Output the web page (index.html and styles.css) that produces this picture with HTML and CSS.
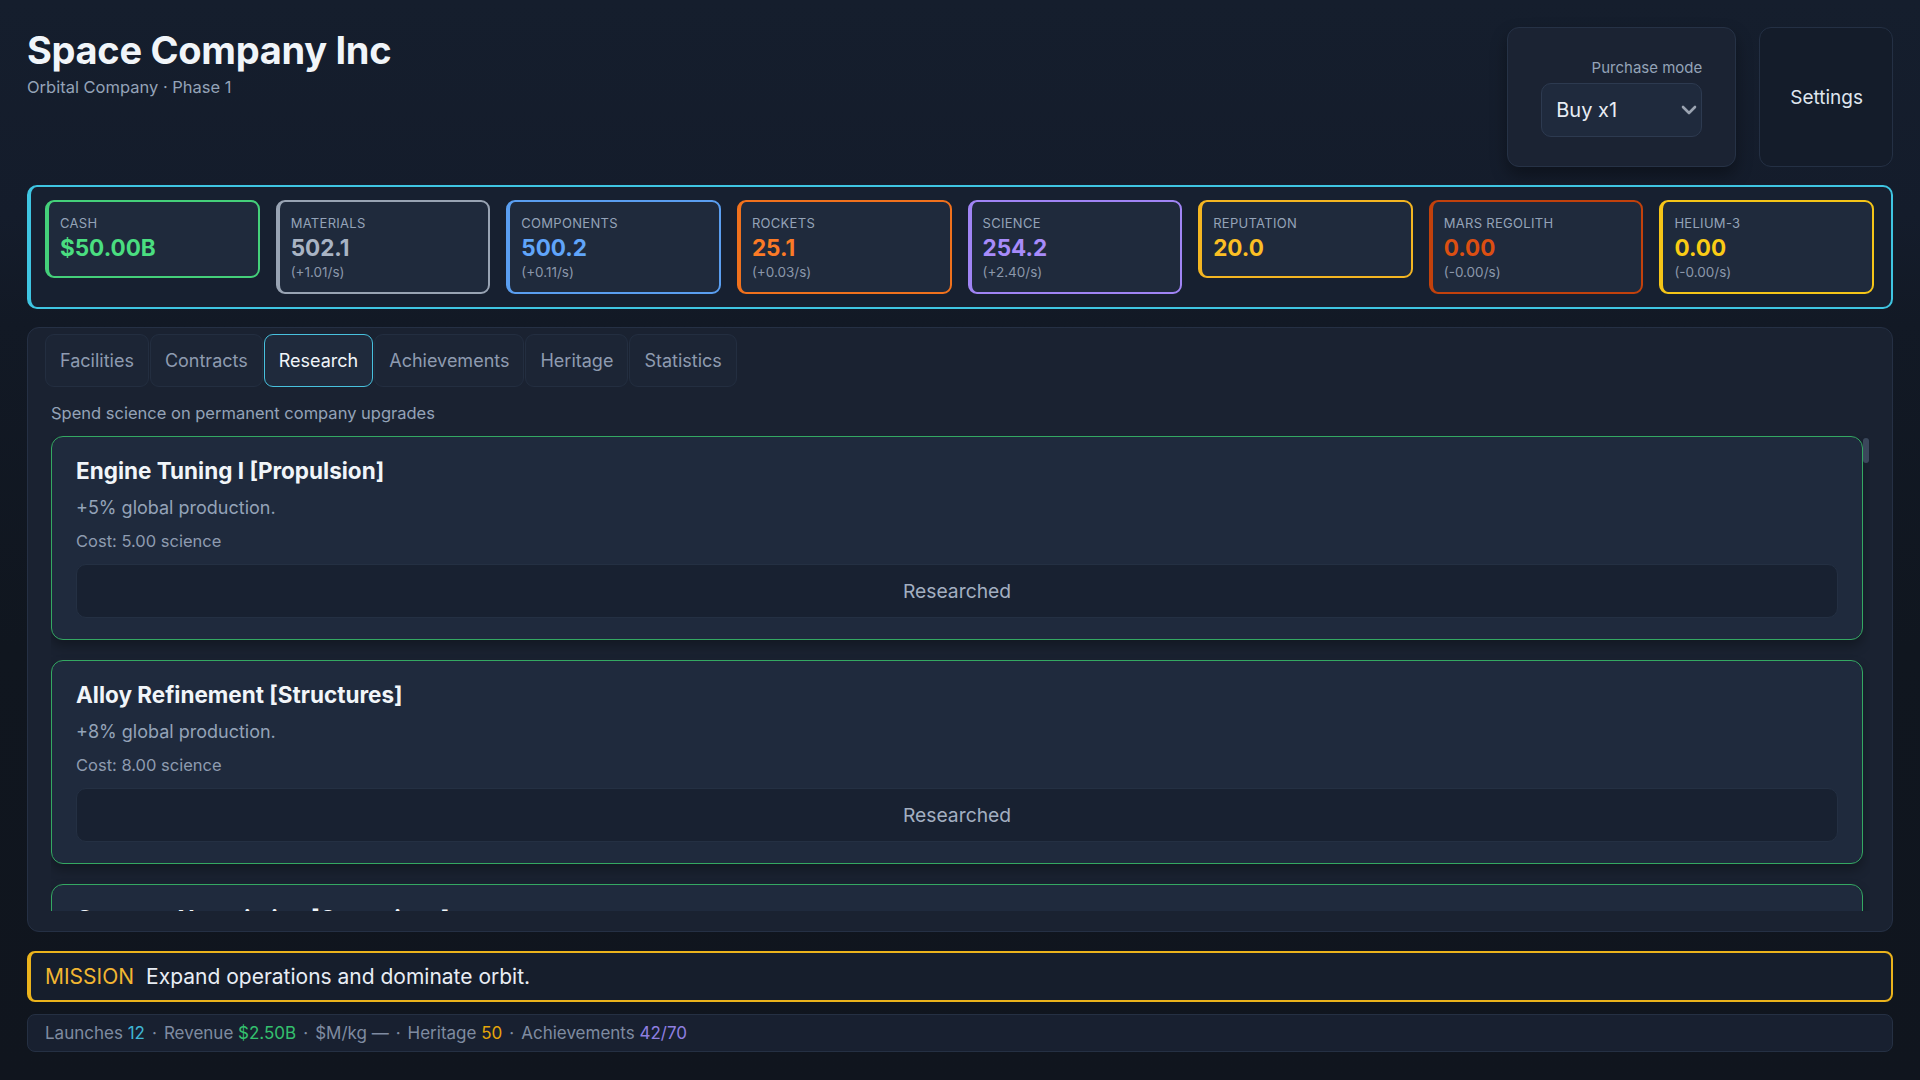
FILE: index.html
```html
<!DOCTYPE html>
<html lang="en">
<head>
<meta charset="utf-8">
<title>Space Company Inc</title>
<link rel="stylesheet" href="styles.css">
</head>
<body>
<div class="app">
  <header class="topbar">
    <div class="brand">
      <h1 class="brand-title">Space Company Inc</h1>
      <div class="brand-sub">Orbital Company · Phase 1</div>
    </div>
    <div class="top-actions">
      <div class="purchase-box">
        <label class="purchase-label" for="buymode">Purchase mode</label>
        <div class="select-wrap">
          <select id="buymode" class="select">
            <option>Buy x1</option>
            <option>Buy x10</option>
            <option>Buy x100</option>
            <option>Buy max</option>
          </select>
          <svg class="select-chevron" width="16" height="10" viewBox="0 0 16 10" aria-hidden="true"><polyline points="2,2 8,8 14,2" fill="none" stroke="#9aa3b1" stroke-width="2.6" stroke-linecap="round" stroke-linejoin="round"/></svg>
        </div>
      </div>
      <button class="settings-btn" type="button">Settings</button>
    </div>
  </header>

  <section class="resources">
    <div class="res res-cash"><div class="res-label">Cash</div><div class="res-value">$50.00B</div></div>
    <div class="res res-materials"><div class="res-label">Materials</div><div class="res-value">502.1</div><div class="res-rate">(+1.01/s)</div></div>
    <div class="res res-components"><div class="res-label">Components</div><div class="res-value">500.2</div><div class="res-rate">(+0.11/s)</div></div>
    <div class="res res-rockets"><div class="res-label">Rockets</div><div class="res-value">25.1</div><div class="res-rate">(+0.03/s)</div></div>
    <div class="res res-science"><div class="res-label">Science</div><div class="res-value">254.2</div><div class="res-rate">(+2.40/s)</div></div>
    <div class="res res-reputation"><div class="res-label">Reputation</div><div class="res-value">20.0</div></div>
    <div class="res res-regolith"><div class="res-label">Mars Regolith</div><div class="res-value">0.00</div><div class="res-rate">(-0.00/s)</div></div>
    <div class="res res-helium"><div class="res-label">Helium-3</div><div class="res-value">0.00</div><div class="res-rate">(-0.00/s)</div></div>
  </section>

  <main class="panel">
    <nav class="tabs">
      <button class="tab" type="button">Facilities</button>
      <button class="tab" type="button">Contracts</button>
      <button class="tab active" type="button">Research</button>
      <button class="tab" type="button">Achievements</button>
      <button class="tab" type="button">Heritage</button>
      <button class="tab" type="button">Statistics</button>
    </nav>
    <p class="panel-hint">Spend science on permanent company upgrades</p>
    <div class="list-wrap">
      <div class="research-list">
        <article class="research">
          <h3 class="research-title">Engine Tuning I [Propulsion]</h3>
          <p class="research-desc">+5% global production.</p>
          <div class="research-cost">Cost: 5.00 science</div>
          <button class="research-btn" type="button">Researched</button>
        </article>
        <article class="research">
          <h3 class="research-title">Alloy Refinement [Structures]</h3>
          <p class="research-desc">+8% global production.</p>
          <div class="research-cost">Cost: 8.00 science</div>
          <button class="research-btn" type="button">Researched</button>
        </article>
        <article class="research research-partial">
          <h3 class="research-title">Contract Negotiation [Operations]</h3>
        </article>
      </div>
      <div class="scroll-thumb" aria-hidden="true"></div>
    </div>
  </main>

  <div class="mission"><span class="mission-tag">MISSION</span><span class="mission-text">Expand operations and dominate orbit.</span></div>

  <footer class="statline">
    <span>Launches <b class="v-cyan">12</b></span><span class="sep">·</span><span>Revenue <b class="v-green">$2.50B</b></span><span class="sep">·</span><span>$M/kg —</span><span class="sep">·</span><span>Heritage <b class="v-gold">50</b></span><span class="sep">·</span><span>Achievements <b class="v-purple">42/70</b></span>
  </footer>
</div>
</body>
</html>
```

FILE: styles.css
```css
* { box-sizing: border-box; }

html, body { margin: 0; height: 100%; }

body {
  font-family: Inter, "Noto Sans", "Liberation Sans", sans-serif;
  color: #e2e8f0;
  background: linear-gradient(180deg, #151e2d 0%, #141c2b 20%, #121925 30%, #10161f 60%, #10151e 100%);
  -webkit-font-smoothing: antialiased;
}

.app {
  height: 100vh;
  padding: 27px 27px 28px;
  display: flex;
  flex-direction: column;
  gap: 18px;
}

/* Header */
.topbar {
  display: flex;
  justify-content: space-between;
  align-items: flex-start;
  flex-shrink: 0;
}

.brand-title {
  margin: 0;
  font-size: 38px;
  line-height: 46px;
  font-weight: 700;
  color: #f1f5f9;
  letter-spacing: -0.3px;
}

.brand-sub {
  margin-top: 3px;
  font-size: 16.5px;
  line-height: 22px;
  color: #94a3b8;
}

.top-actions {
  display: flex;
  gap: 23px;
  align-items: stretch;
}

.purchase-box {
  display: flex;
  flex-direction: column;
  align-items: flex-end;
  gap: 4px;
  padding: 29px 33px;
  background: #1b2333;
  border: 1px solid #263246;
  border-radius: 12px;
  box-shadow: 0 8px 16px rgba(0, 0, 0, 0.35);
}

.purchase-label {
  font-size: 15px;
  line-height: 22px;
  color: #94a3b8;
}

.select-wrap { position: relative; }

.select {
  -webkit-appearance: none;
  appearance: none;
  display: block;
  width: 161px;
  height: 54px;
  padding: 0 40px 0 14px;
  font-family: Inter, "Noto Sans", "Liberation Sans", sans-serif;
  font-size: 20px;
  color: #e8edf4;
  background: #1f2a3d;
  border: 1px solid #2d3a50;
  border-radius: 10px;
  outline: none;
}

.select-chevron {
  position: absolute;
  right: 5px;
  top: 22px;
  pointer-events: none;
}

.settings-btn {
  padding: 0 29px 0 30px;
  font-family: Inter, "Noto Sans", "Liberation Sans", sans-serif;
  font-size: 19px;
  color: #dfe5ee;
  background: #141c2a;
  border: 1px solid #243044;
  border-radius: 12px;
  cursor: pointer;
}

/* Resources */
.resources {
  display: grid;
  grid-template-columns: repeat(8, minmax(0, 1fr));
  gap: 16px;
  align-items: start;
  padding: 13px 17px 13px 14px;
  border: 2px solid #3fc5e2;
  border-left-width: 4px;
  border-radius: 10px;
  background: #172030;
  flex-shrink: 0;
}

.res {
  padding: 12px 12px 12px 11px;
  border: 2px solid #94a3b8;
  border-left-width: 4px;
  border-radius: 9px;
  background: #1f2a3c;
}

.res-label {
  font-size: 13px;
  line-height: 18px;
  letter-spacing: 0.3px;
  color: #94a3b8;
  text-transform: uppercase;
}

.res-value {
  font-size: 22.5px;
  line-height: 32px;
  font-weight: 700;
}

.res-rate {
  margin-top: 1px;
  font-size: 13.5px;
  line-height: 15px;
  color: #8b97aa;
}

.res-cash { border-color: #44d07a; }
.res-cash .res-value { color: #4ade80; }
.res-materials { border-color: #98a3b3; }
.res-materials .res-value { color: #a9b4c4; }
.res-components { border-color: #5a9ef0; }
.res-components .res-value { color: #60a5fa; }
.res-rockets { border-color: #f0711d; }
.res-rockets .res-value { color: #fb7a26; }
.res-science { border-color: #a084f5; }
.res-science .res-value { color: #a78bfa; }
.res-reputation { border-color: #f4b622; }
.res-reputation .res-value { color: #fbbf24; }
.res-regolith { border-color: #c2410c; }
.res-regolith .res-value { color: #dc4f12; }
.res-helium { border-color: #f5c518; }
.res-helium .res-value { color: #facc15; }

/* Main panel */
.panel {
  flex: 1;
  min-height: 0;
  display: flex;
  flex-direction: column;
  padding: 6px 22px 20px 23px;
  background: #1a2231;
  border: 1px solid #253044;
  border-radius: 12px;
}

.tabs {
  display: flex;
  gap: 1px;
  margin-left: -6px;
  flex-shrink: 0;
}

.tab {
  padding: 14px 14px;
  font-family: Inter, "Noto Sans", "Liberation Sans", sans-serif;
  font-size: 18px;
  line-height: 23px;
  color: #8e9bb0;
  background: #1c2535;
  border: 1px solid #232e40;
  border-radius: 9px;
  cursor: pointer;
}

.tab.active {
  color: #f1f5f9;
  background: #1f2a3c;
  border-color: #48c1de;
}

.panel-hint {
  margin: 15px 0 12px;
  font-size: 16.5px;
  line-height: 22px;
  color: #94a3b8;
  flex-shrink: 0;
}

.list-wrap {
  position: relative;
  flex: 1;
  min-height: 0;
  display: flex;
}

.research-list {
  flex: 1;
  min-height: 0;
  overflow: hidden;
  padding-right: 7px;
  display: flex;
  flex-direction: column;
  gap: 20px;
}

.scroll-thumb {
  position: absolute;
  right: 1px;
  top: 2px;
  width: 6px;
  height: 25px;
  background: #3a475b;
  border-radius: 3px;
}

.research {
  flex-shrink: 0;
  padding: 20px 24px 21px;
  background: #1f2a3d;
  border: 1px solid #34a862;
  border-radius: 12px;
  box-shadow: 0 6px 12px rgba(0, 0, 0, 0.3);
}

.research-partial { min-height: 204px; }

.research-title {
  margin: 0;
  font-size: 22.5px;
  line-height: 28px;
  font-weight: 700;
  color: #f1f5f9;
}

.research-desc {
  margin: 11px 0 0;
  font-size: 18px;
  line-height: 24px;
  color: #94a3b8;
}

.research-cost {
  margin-top: 11px;
  font-size: 16.5px;
  line-height: 21px;
  color: #8e9bb0;
}

.research-btn {
  display: block;
  width: 100%;
  height: 54px;
  margin-top: 12px;
  font-family: Inter, "Noto Sans", "Liberation Sans", sans-serif;
  font-size: 19.3px;
  color: #a3afc1;
  background: #182131;
  border: 1px solid #243043;
  border-radius: 10px;
}

/* Mission */
.mission {
  flex-shrink: 0;
  margin-top: 1px;
  display: flex;
  align-items: center;
  gap: 12px;
  padding: 10px 14px;
  background: #161e2c;
  border: 2px solid #ebb31c;
  border-left-width: 4px;
  border-radius: 8px;
  font-size: 21px;
  line-height: 27px;
}

.mission-tag { color: #f2b632; }
.mission-text { color: #e8edf4; }

/* Footer stats */
.statline {
  flex-shrink: 0;
  margin-top: -6px;
  padding: 7px 17px;
  background: #182030;
  border: 1px solid #253043;
  border-radius: 8px;
  font-size: 17px;
  line-height: 22px;
  color: #7f8ba0;
}

.statline b { font-weight: 400; }
.statline .sep { margin: 0 7px; }
.v-cyan { color: #3fb5d5; }
.v-green { color: #34c06e; }
.v-gold { color: #e5a50a; }
.v-purple { color: #8f7fe0; }
```
